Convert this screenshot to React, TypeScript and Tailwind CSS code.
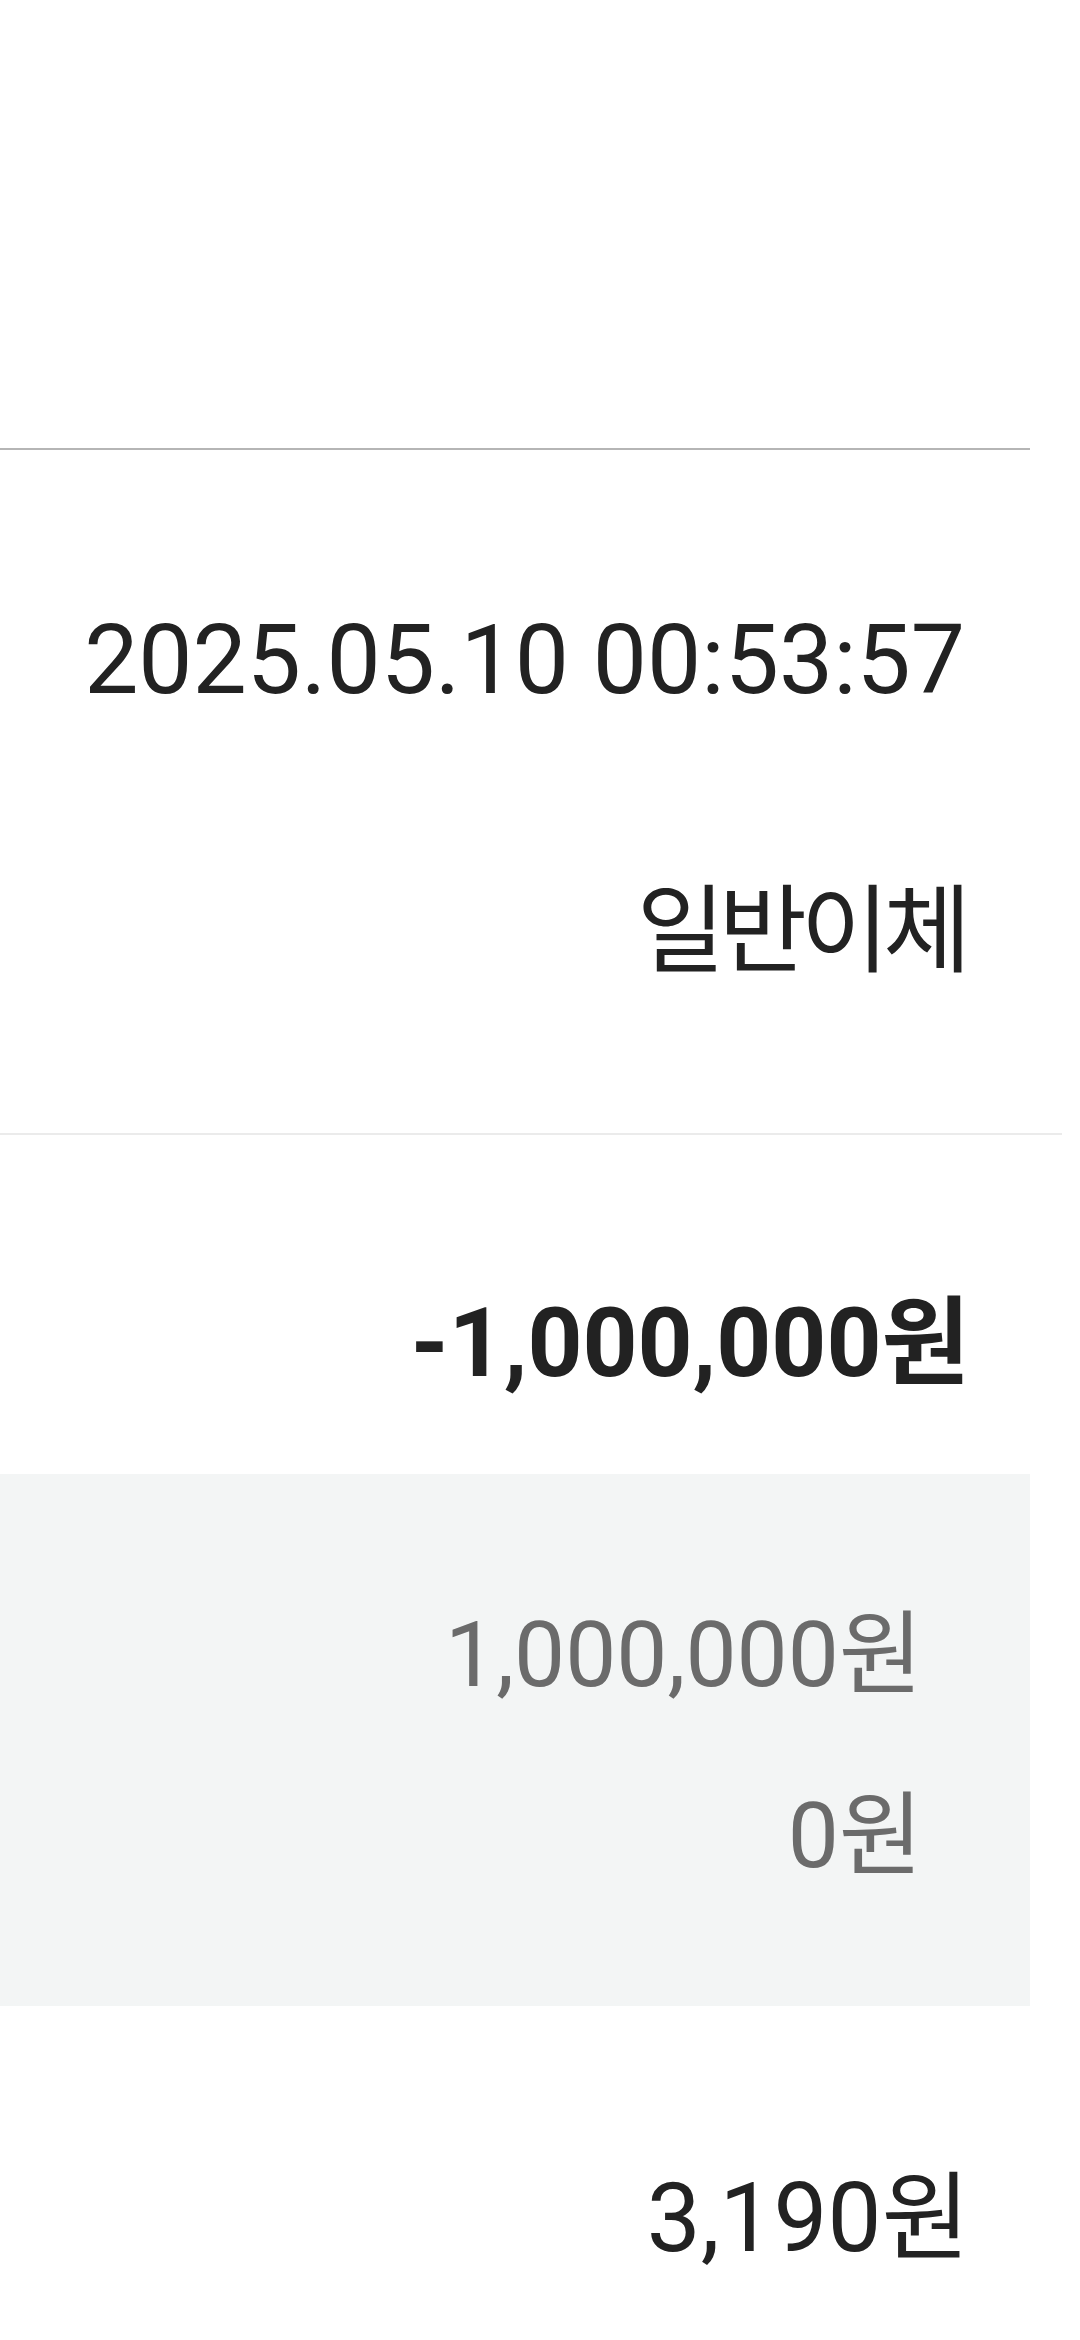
import React from "react";

const FONT = { fontFamily: 'Roboto, "Noto Sans CJK KR", sans-serif' };

function Row({ children, className = "" }: { children: React.ReactNode; className?: string }) {
  return (
    <div className={`flex h-[120px] items-center justify-end leading-[120px] ${className}`}>
      {children}
    </div>
  );
}

export default function App() {
  return (
    <div className="flex h-[2340px] w-[1080px] flex-col overflow-hidden bg-white" style={FONT}>
      {/* empty header area */}
      <div className="h-[448px] shrink-0" />
      <div className="h-[2px] w-[1030px] shrink-0 bg-[#b5b5b5]" />

      {/* date + type */}
      <div className="flex flex-col pr-[115px] pt-[150px] text-[96px] text-[#222222]">
        <Row className="text-[96.5px]">2025.05.10 00:53:57</Row>
        <Row className="mt-[151px]">
          <span className="tracking-[-0.065em]">일반이체</span>
        </Row>
      </div>

      <div className="mt-[142px] h-[2px] w-[1062px] shrink-0 bg-[#ebebeb]" />

      {/* amount */}
      <div className="flex flex-col pr-[115px] pt-[148px] text-[96px] font-bold text-[#222222]">
        <Row>
          -1,000,000<span className="tracking-[-0.05em]">원</span>
        </Row>
      </div>

      {/* breakdown box */}
      <div className="mt-[71px] flex h-[532px] w-[1030px] shrink-0 flex-col bg-[#f3f5f5] pr-[112px] pt-[121px] text-[91px] text-[#6b6b6b]">
        <Row>
          1,000,000<span className="tracking-[-0.05em]">원</span>
        </Row>
        <Row className="mt-[61px]">
          0<span className="tracking-[-0.05em]">원</span>
        </Row>
      </div>

      {/* fee */}
      <div className="flex flex-col pr-[115px] pt-[152px] text-[96px] text-[#222222]">
        <Row>
          3,190<span className="tracking-[-0.05em]">원</span>
        </Row>
      </div>
    </div>
  );
}
